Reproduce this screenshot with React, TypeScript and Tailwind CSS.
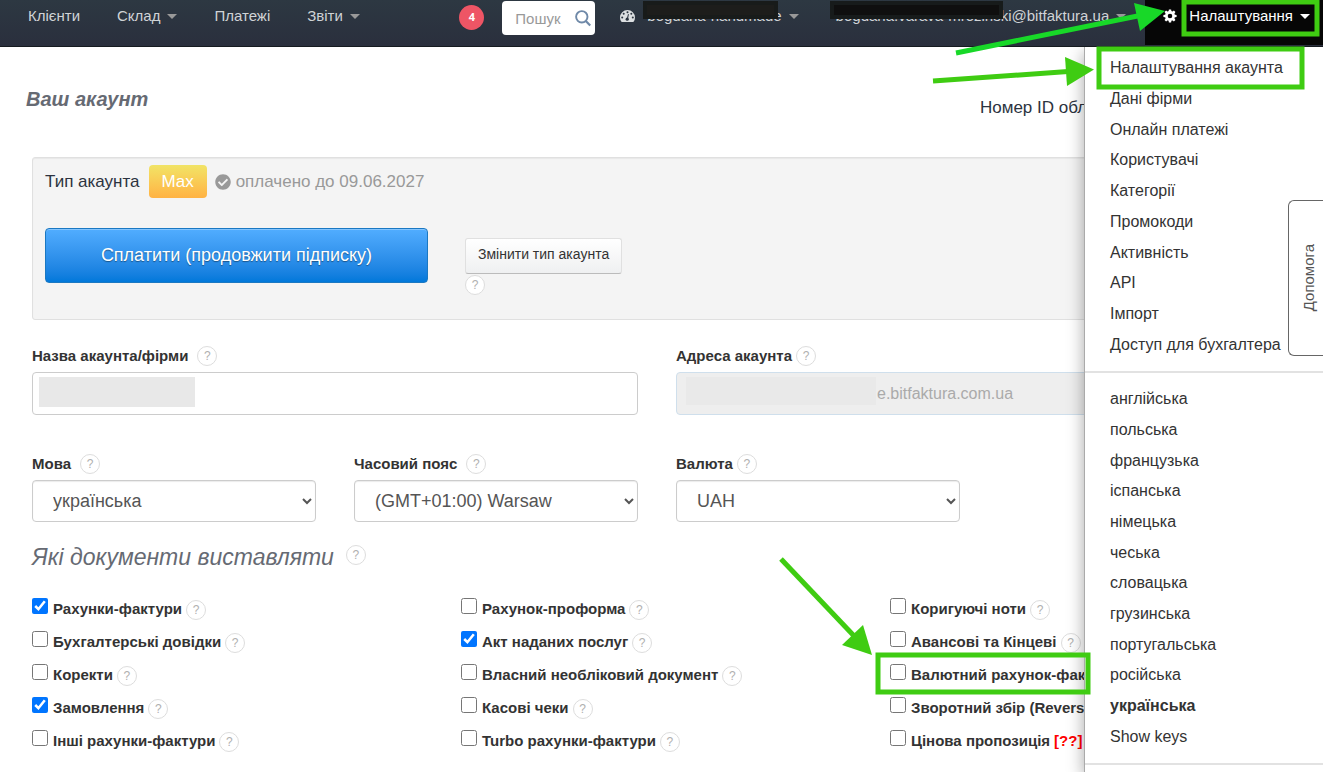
import type { ReactNode } from 'react';
import { FaCheckCircle } from 'react-icons/fa';

const accountLinks = [
  'Налаштування акаунта',
  'Дані фірми',
  'Онлайн платежі',
  'Користувачі',
  'Категорії',
  'Промокоди',
  'Активність',
  'API',
  'Імпорт',
  'Доступ для бухгалтера',
];

const languages = [
  'англійська',
  'польська',
  'французька',
  'іспанська',
  'німецька',
  'чеська',
  'словацька',
  'грузинська',
  'португальська',
  'російська',
  'українська',
  'Show keys',
];

type Doc = { label: string; checked?: boolean; help?: boolean; tag?: string };

const documents: Doc[][] = [
  [
    { label: 'Рахунки-фактури', checked: true, help: true },
    { label: 'Бухгалтерські довідки', help: true },
    { label: 'Коректи', help: true },
    { label: 'Замовлення', checked: true, help: true },
    { label: 'Інші рахунки-фактури', help: true },
  ],
  [
    { label: 'Рахунок-проформа', help: true },
    { label: 'Акт наданих послуг', checked: true, help: true },
    { label: 'Власний необліковий документ', help: true },
    { label: 'Касові чеки', help: true },
    { label: 'Turbo рахунки-фактури', help: true },
  ],
  [
    { label: 'Коригуючі ноти', help: true },
    { label: 'Авансові та Кінцеві', help: true },
    { label: 'Валютний рахунок-фак' },
    { label: 'Зворотний збір (Revers' },
    { label: 'Цінова пропозиція', tag: '[??]' },
  ],
];

const gearAngles = [0, 45, 90, 135, 180, 225, 270, 315];

function Caret({ light = false }: { light?: boolean }) {
  return (
    <svg width="10" height="5" viewBox="0 0 10 5" className={light ? 'text-white' : 'text-[#999]'} aria-hidden>
      <path d="M0 0h10L5 5z" fill="currentColor" />
    </svg>
  );
}

function GaugeIcon() {
  return (
    <svg viewBox="0 0 15 12" className="mr-3 h-3 w-[15px]" aria-hidden>
      <path d="M7.5 0A7.5 7.5 0 0 0 0 7.500c0 1.500.4 2.900 1.200 4 .2.300.4.500.8.500h11c.4 0 .6-.2.8-.5.800-1.100 1.200-2.500 1.200-4A7.5 7.5 0 0 0 7.500 0z" fill="#dcdfe1" />
      <g fill="#2c3540">
        <circle cx="2.200" cy="7.500" r="1" />
        <circle cx="3.700" cy="3.800" r="1" />
        <circle cx="7.500" cy="2.200" r="1" />
        <circle cx="11.300" cy="3.800" r="1" />
        <circle cx="12.800" cy="7.500" r="1" />
        <circle cx="7.200" cy="9.200" r="1.600" />
        <path d="M6.800 9l1.200-5 .9.2L8 9.300z" />
      </g>
    </svg>
  );
}

function GearIcon() {
  return (
    <svg viewBox="0 0 14 14" className="mr-3 size-[14px]" aria-hidden>
      <g fill="#fff">
        {gearAngles.map((angle) => (
          <path key={angle} d="M5.900.4h2.200l.5 2.800H5.400z" transform={`rotate(${angle} 7 7)`} />
        ))}
      </g>
      <circle cx="7" cy="7" r="3.600" fill="none" stroke="#fff" strokeWidth="2.600" />
    </svg>
  );
}

function Help() {
  return (
    <button
      type="button"
      className="flex size-5 shrink-0 items-center justify-center rounded-full border border-[#ddd] bg-white text-xs leading-none text-[#b0b0b0]"
    >
      ?
    </button>
  );
}

function NavLink({ children, caret = false }: { children: ReactNode; caret?: boolean }) {
  return (
    <a href="#" className="flex items-center gap-[7px] whitespace-nowrap">
      {children}
      {caret && <Caret />}
    </a>
  );
}

function SelectField({ id, label, value, gap }: { id: string; label: string; value: string; gap: string }) {
  return (
    <div>
      <div className={`flex h-5 items-center ${gap}`}>
        <label htmlFor={id} className="text-[15px] font-bold text-[#333]">
          {label}
        </label>
        <Help />
      </div>
      <select
        id={id}
        className="mt-[6px] h-[42px] w-full rounded border border-[#ccc] bg-white pr-[2px] pl-4 text-[18px] text-[#555] shadow-[inset_0_1px_1px_rgba(0,0,0,0.08)]"
      >
        <option>{value}</option>
      </select>
    </div>
  );
}

function Header() {
  return (
    <header className="flex h-[47px] items-start justify-between border-b border-[#161b20] bg-linear-to-b from-[#2d3842] to-[#2a2f3d] text-[15px] text-[#d0d3d6]">
      <nav className="flex h-8 items-center gap-[37px] pl-7">
        <NavLink>Клієнти</NavLink>
        <NavLink caret>Склад</NavLink>
        <NavLink>Платежі</NavLink>
        <NavLink caret>Звіти</NavLink>
      </nav>
      <div className="flex items-start">
        <a
          href="#"
          className="mt-[5px] mr-[18px] flex size-[25px] items-center justify-center rounded-full bg-[#ee5565] font-['Open_Sans',sans-serif] text-[11px] font-bold text-white"
        >
          4
        </a>
        <div className="relative mt-px mr-[25px]">
          <input
            type="text"
            aria-label="Пошук"
            placeholder="Пошук"
            className="h-[34px] w-[93px] rounded bg-white pr-6 pl-[13px] text-[15px] placeholder:text-[#999]"
          />
          <svg viewBox="0 0 16 17" className="absolute top-[9px] right-1 h-[17px] w-4 text-[#6f89a8]" aria-hidden>
            <circle cx="6.800" cy="6.800" r="5.700" fill="none" stroke="currentColor" strokeWidth="1.900" />
            <path d="M10.800 11l4.400 4.600" stroke="currentColor" strokeWidth="2.200" />
          </svg>
        </div>
        <div className="flex h-8 items-center">
          <GaugeIcon />
          <div className="relative mr-[37px]">
            <NavLink caret>bogdana-handmade</NavLink>
            <div className="absolute -top-1 -left-1 h-[18px] w-[135px] border-4 border-[#181b1a] bg-[#1d1d1b]" />
          </div>
          <div className="relative mr-[19px]">
            <NavLink caret>bogdana.varava-mrozinski@bitfaktura.ua</NavLink>
            <div className="absolute -top-1 -left-[6px] h-[18px] w-[173px] border-4 border-[#171b1b] bg-[#0f0f0f]" />
          </div>
        </div>
        <button type="button" className="flex h-[45px] items-start bg-[#060606] pr-[13px] pl-[18px] text-white">
          <span className="flex h-8 items-center">
            <GearIcon />
            <span className="mr-[7px]">Налаштування</span>
            <Caret light />
          </span>
        </button>
      </div>
    </header>
  );
}

function SettingsMenu() {
  return (
    <aside className="absolute top-[47px] right-0 bottom-0 w-[239px] overflow-hidden border-l border-[#aaa] bg-white pt-[6px] text-[16px] text-[#333] shadow-[0_5px_16px_rgba(0,0,0,0.35)] [clip-path:inset(0_0_0_-30px)]">
      <ul className="flex h-[307px] flex-col">
        {accountLinks.map((item) => (
          <li key={item} className="flex flex-1 items-center pl-[25px]">
            <a href="#" className="whitespace-nowrap">
              {item}
            </a>
          </li>
        ))}
      </ul>
      <hr className="my-[11px] border-t-2 border-[#e2e2e2]" />
      <ul className="flex h-[368px] flex-col">
        {languages.map((item) => (
          <li key={item} className="flex flex-1 items-center pl-[25px]">
            <a href="#" className={item === 'українська' ? 'font-bold' : ''}>
              {item}
            </a>
          </li>
        ))}
      </ul>
      <hr className="my-[11px] border-t-2 border-[#e2e2e2]" />
    </aside>
  );
}

function AccountPanel() {
  return (
    <section className="h-[163px] rounded-[3px] border border-[#e0e0e0] bg-[#f4f4f4] px-3 pt-[7px] shadow-[inset_0_1px_1px_rgba(0,0,0,0.05)]">
      <div className="flex items-center text-[17px] text-[#2c3340]">
        Тип акаунта
        <span className="ml-[9px] flex h-[33px] items-center rounded bg-linear-to-b from-[#f1e466] to-[#ffb243] px-[13px] text-white">
          Max
        </span>
        <FaCheckCircle className="mr-[5px] ml-2 size-4 text-[#999]" aria-hidden />
        <span className="text-[#999]">оплачено до 09.06.2027</span>
      </div>
      <div className="mt-[30px] flex items-start gap-[37px]">
        <button
          type="button"
          className="h-[55px] w-[383px] rounded border border-[#1b78c2] bg-linear-to-b from-[#51adff] to-[#0078da] text-[18px] text-white shadow-[inset_0_1px_0_rgba(255,255,255,0.3)] text-shadow-[0_1px_1px_rgba(0,0,0,0.4)]"
        >
          Сплатити (продовжити підписку)
        </button>
        <div className="pt-[10px]">
          <button
            type="button"
            className="mb-px h-9 rounded-[3px] border border-[#e0e0e0] border-b-[#bbb] bg-linear-to-b from-white to-[#eff0f1] px-3 pb-1 text-[14px] text-[#333]"
          >
            Змінити тип акаунта
          </button>
          <Help />
        </div>
      </div>
    </section>
  );
}

function Annotations() {
  return (
    <svg className="pointer-events-none absolute inset-0 h-full w-full" aria-hidden>
      <g fill="none" stroke="#3fcc12" strokeWidth="5">
        <rect x="1184" y="2" width="133" height="32" />
        <rect x="1099" y="49" width="203" height="38" />
        <rect x="878" y="655" width="210" height="37" />
        <path d="M933 81L1068 71.500" />
        <path d="M781 559L856 638" />
        <path d="M956 53L1140 15.500" stroke="#18d828" />
      </g>
      <path d="M1094 69.500L1065 57l2 29z" fill="#3fcc12" />
      <path d="M872 655l-9-30-21 20z" fill="#3fcc12" />
      <path d="M1165 11l-31-8 6 28z" fill="#18d828" />
    </svg>
  );
}

export default function App() {
  return (
    <div className="relative h-screen overflow-hidden bg-white font-['Liberation_Sans',Arial,sans-serif]">
      <Header />
      <main className="pr-[41px] pl-8">
        <div className="flex h-[110px] justify-between">
          <h1 className="-ml-[6px] pt-[37px] text-[20px] font-bold text-[#666a73] italic">Ваш акаунт</h1>
          <p className="w-[302px] pt-12 text-[17px] text-[#2c3340]">Номер ID обл</p>
        </div>

        <AccountPanel />

        <form className="mt-[26px]">
          <div className="grid grid-cols-2 gap-x-[38px]">
            <div>
              <div className="flex h-5 items-center gap-[9px]">
                <label htmlFor="name" className="text-[15px] font-bold text-[#333]">
                  Назва акаунта/фірми
                </label>
                <Help />
              </div>
              <div className="relative mt-[6px]">
                <input id="name" className="block h-[43px] w-full rounded border border-[#ccc] bg-white px-5" />
                <div className="absolute top-[5px] left-[7px] h-[30px] w-[156px] bg-[#e8e8e8]" />
              </div>
            </div>
            <div>
              <div className="flex h-5 items-center gap-1">
                <label htmlFor="address" className="text-[15px] font-bold text-[#333]">
                  Адреса акаунта
                </label>
                <Help />
              </div>
              <div className="relative mt-[6px]">
                <input
                  id="address"
                  disabled
                  defaultValue="e.bitfaktura.com.ua"
                  className="block h-[43px] w-full rounded border border-[#cfdfec] bg-[#eee] pl-[200px] text-[16px] text-[#aaa]"
                />
                <div className="absolute top-[5px] left-[10px] h-7 w-[190px] bg-[#e9e9e9]" />
              </div>
            </div>
          </div>

          <div className="mt-[39px] grid grid-cols-4 gap-x-[38px]">
            <SelectField id="language" label="Мова" value="українська" gap="gap-[9px]" />
            <SelectField id="timezone" label="Часовий пояс" value="(GMT+01:00) Warsaw" gap="gap-[9px]" />
            <SelectField id="currency" label="Валюта" value="UAH" gap="gap-1" />
          </div>

          <div className="mt-[19px] flex items-start gap-3">
            <h2 className="text-[23px] leading-8 text-[#666a73] italic">Які документи виставляти</h2>
            <div className="pt-1">
              <Help />
            </div>
          </div>

          <div className="mt-5 grid grid-cols-3 gap-x-[37px]">
            {documents.map((column) => (
              <ul key={column[0].label}>
                {column.map((doc) => (
                  <li key={doc.label} className="flex h-[33px] items-center gap-1 whitespace-nowrap">
                    <label className="flex items-center gap-[5px] text-[15px] font-bold text-[#333]">
                      <input type="checkbox" defaultChecked={doc.checked} className="mb-[7px] size-4" />
                      {doc.label}
                    </label>
                    {doc.help && <Help />}
                    {doc.tag && <span className="text-[15px] font-bold text-[#f00]">{doc.tag}</span>}
                  </li>
                ))}
              </ul>
            ))}
          </div>
        </form>
      </main>

      <SettingsMenu />

      <button
        type="button"
        className="absolute top-[200px] right-0 flex h-[156px] w-[35px] items-center justify-center rounded-l-md border border-r-0 border-[#666] bg-white pl-[6px] text-[15px] text-[#555]"
      >
        <span className="rotate-180 [writing-mode:vertical-rl]">Допомога</span>
      </button>

      <Annotations />
    </div>
  );
}
